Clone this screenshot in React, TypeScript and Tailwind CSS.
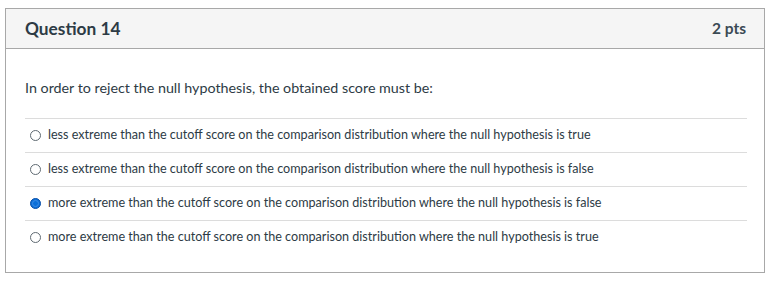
const answers = [
  { text: "less extreme than the cutoff score on the comparison distribution where the null hypothesis is true", checked: false },
  { text: "less extreme than the cutoff score on the comparison distribution where the null hypothesis is false", checked: false },
  { text: "more extreme than the cutoff score on the comparison distribution where the null hypothesis is false", checked: true },
  { text: "more extreme than the cutoff score on the comparison distribution where the null hypothesis is true", checked: false },
];

function Radio({ checked }: { checked: boolean }) {
  if (checked) {
    return (
      <span className="w-[11px] h-[11px] rounded-full bg-[#0b6fd8] border border-[#0a4fa8] flex items-center justify-center shrink-0">
        <span className="w-[7px] h-[7px] rounded-full bg-[#0b6fd8] border border-[#3d8be6]" />
      </span>
    );
  }
  return <span className="w-[11px] h-[11px] rounded-full border border-[#5f6a72] bg-white shrink-0" />;
}

export default function App() {
  return (
    <div className="w-[773px] h-[282px] bg-white pt-[8px] pl-[5px] font-['Lato','Noto_Sans',sans-serif] text-[#2d3b45]">
      <div className="w-[760px] h-[265px] border border-[#a8a8a8]">
        <div className="h-[40px] bg-[#f5f5f5] border-b border-[#a8a8a8] flex items-center justify-between pl-[19px] pr-[18px]">
          <span className="text-[17.3px] font-bold">Question 14</span>
          <span className="text-[15.5px] font-bold text-[#3b4a54]">2 pts</span>
        </div>
        <div className="pl-[19px] pr-[17px]">
          <p className="text-[14.3px] mt-[29px] leading-[20px]">
            In order to reject the null hypothesis, the obtained score must be:
          </p>
          <div className="mt-[20px]">
            {answers.map((a, i) => (
              <div key={i} className="border-t border-[#dcdcdc] h-[34px] flex items-center">
                <span className="ml-[5px] mr-[7px] flex"><Radio checked={a.checked} /></span>
                <span className="text-[12.6px]">{a.text}</span>
              </div>
            ))}
          </div>
        </div>
      </div>
    </div>
  );
}
